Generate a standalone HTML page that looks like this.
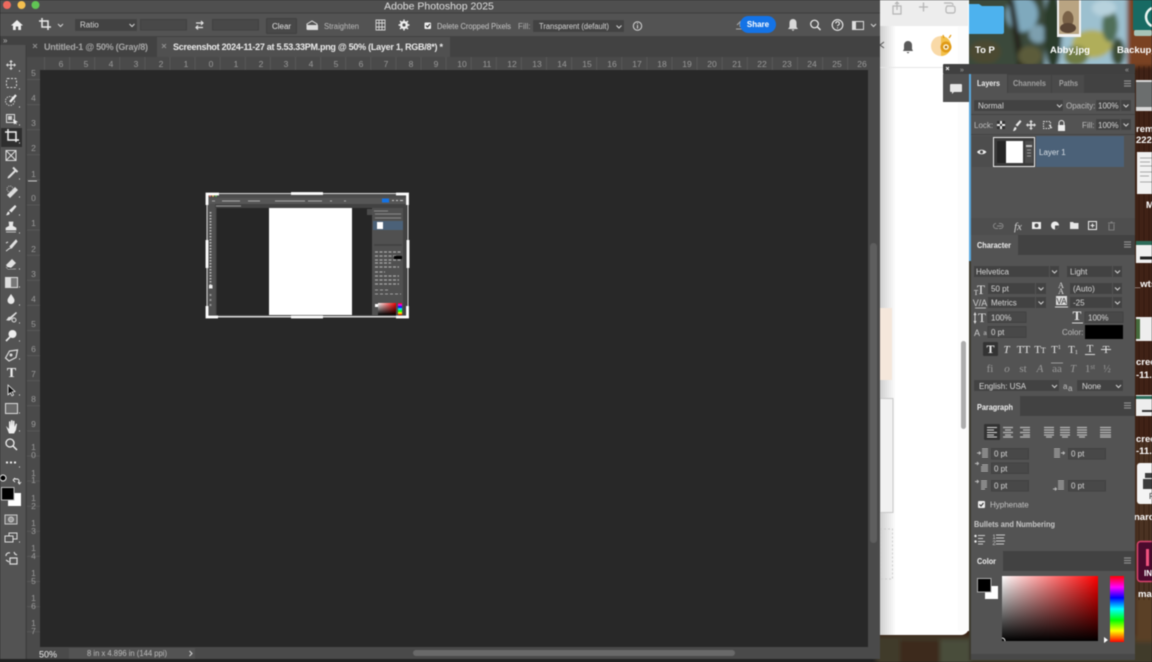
<!DOCTYPE html>
<html lang="en"><head><meta charset="utf-8"><title>Adobe Photoshop 2025</title>
<style>
html,body{margin:0;padding:0;background:#222;width:1152px;height:662px;overflow:hidden}
svg{display:block;filter:blur(.42px)}
text{font-family:"Liberation Sans",sans-serif;font-size:8px;fill:#d8d8d8}
.r{fill:#9a9a9a;font-size:8.5px;text-anchor:middle}
.w{fill:#fff;font-weight:bold;font-size:9.5px}
.i{fill:none;stroke:#dcdcdc;stroke-width:1.2}
.c{fill:none;stroke:#d5d5d5;stroke-width:1}
.t{fill:#e8e8e8;font-family:"Liberation Serif",serif;font-size:11px;text-anchor:middle}
.g{fill:#9a9a9a;font-family:"Liberation Serif",serif;font-size:11px;text-anchor:middle}
.h{font-size:8.5px;font-weight:bold;fill:#eee}
</style></head><body>
<svg width="1152" height="662" viewBox="0 0 1152 662" xmlns="http://www.w3.org/2000/svg">
<defs>
<linearGradient id="gw" x1="0" x2="1" y1="0" y2="0"><stop offset="0" stop-color="#fff"/><stop offset="1" stop-color="#f00"/></linearGradient>
<linearGradient id="gk" x1="0" x2="0" y1="0" y2="1"><stop offset="0" stop-color="#000" stop-opacity="0"/><stop offset="1" stop-color="#000"/></linearGradient>
<linearGradient id="gh" x1="0" x2="0" y1="0" y2="1"><stop offset="0" stop-color="#f00"/><stop offset=".17" stop-color="#f0f"/><stop offset=".33" stop-color="#00f"/><stop offset=".5" stop-color="#0ff"/><stop offset=".67" stop-color="#0f0"/><stop offset=".83" stop-color="#ff0"/><stop offset="1" stop-color="#f00"/></linearGradient>
<linearGradient id="gs" x1="0" x2="1" y1="0" y2="0"><stop offset="0" stop-color="#cfcfcf"/><stop offset="1" stop-color="#fff"/></linearGradient>
<filter id="bl"><feGaussianBlur stdDeviation="2"/></filter>
</defs>

<!-- desktop wallpaper -->
<rect x="880" y="0" width="272" height="662" fill="#3a2114"/>
<g filter="url(#bl)">
<rect x="965" y="-4" width="95" height="72" fill="#3b4a3a"/>
<ellipse cx="1022" cy="14" rx="16" ry="18" fill="#7fa9bd"/>
<ellipse cx="1038" cy="34" rx="9" ry="9" fill="#7d9fae"/>
<path d="M1008 0l10 70h8L1014 0z" fill="#26281c"/>
<ellipse cx="985" cy="52" rx="16" ry="12" fill="#4c4a32"/>
<ellipse cx="1030" cy="56" rx="12" ry="10" fill="#5c5c3a"/>
<rect x="1045" y="-4" width="85" height="72" fill="#9cc0cf"/>
<ellipse cx="1053" cy="30" rx="9" ry="40" fill="#2a3a2b"/>
<ellipse cx="1092" cy="44" rx="20" ry="14" fill="#b0ae5a"/>
<ellipse cx="1076" cy="56" rx="12" ry="10" fill="#6f7c44"/>
<ellipse cx="1110" cy="26" rx="8" ry="16" fill="#4f6e58"/>
<ellipse cx="1104" cy="8" rx="12" ry="8" fill="#b7d2dd"/>
<ellipse cx="1118" cy="52" rx="7" ry="14" fill="#3a4c34"/>
<rect x="1127" y="-4" width="30" height="72" fill="#7a4223"/>
<rect x="1135" y="66" width="20" height="540" fill="#3f2113"/>
<rect x="1135" y="440" width="20" height="170" fill="#4c3320"/>
<rect x="876" y="636" width="280" height="30" fill="#413b2a"/>
<rect x="1135" y="596" width="20" height="46" fill="#5a4128"/>
<rect x="900" y="640" width="40" height="24" fill="#3c2a1c"/>
<rect x="940" y="640" width="30" height="24" fill="#4a4d3a"/>
</g>
<path d="M1139 66V600M1144 66V600M1149 66V600" stroke="#2b150b" stroke-width="1" opacity=".55"/>
<rect x="969" y="66" width="2" height="594" fill="#3c3a2e"/>
<rect x="969" y="66" width="2" height="195" fill="#59a7dc"/>

<!-- desktop items -->
<path d="M969 4h10l3 2h20a2 2 0 0 1 2 2v24a2 2 0 0 1-2 2h-33z" fill="#4db2ee"/>
<rect x="1057" y="0" width="24" height="37" fill="#f2f2f2"/>
<rect x="1059" y="0" width="20" height="34" fill="#b9a482"/>
<ellipse cx="1068" cy="19" rx="5.500" ry="8" fill="#7a6248"/><ellipse cx="1068" cy="28" rx="8" ry="5" fill="#5b4636"/>
<path d="M1133 0h19v30h-19z" fill="#176a63"/>
<rect x="1134" y="30" width="18" height="6" rx="2" fill="#a7c4b8"/>
<path d="M1152 8a10 10 0 0 0-6 9 10 10 0 0 0 6 9" fill="none" stroke="#e8f4f0" stroke-width="2.500"/>
<text x="975" y="53" class="w">To P</text>
<text x="1050" y="53" class="w">Abby.jpg</text>
<text x="1117" y="53" class="w">Backup_</text>

<rect x="1136" y="80" width="16" height="31" fill="#d8d8d8"/><rect x="1136" y="82" width="16" height="25" fill="#6b6e6e"/>
<text x="1136" y="132" class="w">rem</text><text x="1136" y="143" class="w">222</text>
<rect x="1137" y="152" width="15" height="42" fill="#f1f1f1"/>
<path d="M1140 158h12M1140 162h10M1140 166h12M1140 172h12M1140 176h9M1140 182h12" stroke="#aaa" stroke-width="1"/>
<text x="1146" y="208" class="w">M</text>
<rect x="1136" y="241" width="16" height="22" fill="#f0f0f0"/><rect x="1136" y="241" width="16" height="4" fill="#2d6a58"/><path d="M1140 258h12" stroke="#222" stroke-width="3"/>
<text x="1135" y="287" class="w">_wts</text>
<rect x="1136" y="317" width="16" height="24" fill="#eee"/><rect x="1136" y="319" width="4" height="20" fill="#456a3c"/>
<text x="1136" y="365" class="w">cree</text><text x="1136" y="378" class="w">-11...</text>
<rect x="1136" y="395" width="16" height="21" fill="#eee"/><rect x="1136" y="396" width="16" height="3" fill="#2d6a58"/><path d="M1142 411h10" stroke="#333" stroke-width="2"/>
<text x="1136" y="442" class="w">cree</text><text x="1136" y="454" class="w">-11...</text>
<rect x="1137" y="463" width="20" height="41" rx="3" fill="#f4f4f4"/>
<path d="M1145 473h7v5h-7zM1143 479h9v10h-9z" fill="#3c3c3c"/><text x="1149" y="499" style="fill:#333;font-size:8.500px">P</text>
<text x="1134" y="520" class="w">narc</text>
<rect x="1137.500" y="541.500" width="20" height="40" rx="3" fill="#4b0a2d" stroke="#d8446d" stroke-width="1.500"/>
<rect x="1146" y="549" width="3" height="17" fill="#f0527f"/>
<text x="1144" y="576" class="w" style="font-size:8px">IN</text>
<text x="1138" y="597" class="w">mar</text>

<!-- browser window -->
<path d="M878 0H969V627a8 8 0 0 1-8 8H878z" fill="#fff"/>
<rect x="880" y="0" width="88" height="26" fill="#ededed"/>
<rect x="880" y="26" width="16" height="609" fill="url(#gs)"/>
<rect x="958" y="26" width="11" height="605" fill="#fcfcfc"/>
<rect x="880" y="67" width="78" height="1" fill="#e6e6e6"/>
<rect x="880" y="308" width="12" height="72" fill="#f5e7db"/>
<rect x="880" y="398.500" width="13" height="114" fill="#f1f1f1" stroke="#c8c8c8"/>
<rect x="880" y="529" width="12.500" height="50" fill="none" stroke="#ccc" stroke-dasharray="2 2"/>
<rect x="961" y="341" width="5" height="88" rx="2.500" fill="#adadad"/>
<path d="M893 6h8v8h-8zM897 10V2M895 4l2-2 2 2" fill="none" stroke="#b5b5b5" stroke-width="1.200"/>
<path d="M919 7h9M923.500 2.500v9" stroke="#b5b5b5" stroke-width="1.300"/>
<path d="M944 3h7a2 2 0 0 1 2 2M947 6h6a2 2 0 0 1 2 2v3a2 2 0 0 1-2 2h-5a2 2 0 0 1-2-2V8z" fill="none" stroke="#b5b5b5" stroke-width="1.200"/>
<path d="M908 41a4 4 0 0 1 4 4v4l1 2h-10l1-2v-4a4 4 0 0 1 4-4zM906.500 52h3l-1.500 1.500z" fill="#5a5a5a"/>
<circle cx="941" cy="46" r="10" fill="#f9d9a7"/>
<path d="M941 36a10 10 0 0 1 0 20z" fill="#f3c04a"/><circle cx="946" cy="47" r="5.500" fill="#e09a16"/><circle cx="946" cy="47" r="2.800" fill="#fff4d6"/><circle cx="946" cy="47" r="1.300" fill="#a86a06"/>
<path d="M949 38l2-3M944 38l-1-3" stroke="#e09a16" stroke-width="1.200"/>
<path d="M884 42l-4 3 4 3" stroke="#555" fill="none"/>

<!-- Photoshop window -->
<path d="M0 0H880V659H0z" fill="#444"/>
<rect x="0" y="0" width="880" height="13" fill="#4f4f4f"/>
<circle cx="7" cy="5" r="4" fill="#ed6a5e"/><circle cx="21.500" cy="5" r="4" fill="#f4bf4f"/><circle cx="35.500" cy="5" r="4" fill="#61c554"/>
<text x="439" y="9.500" style="font-size:10.500px;text-anchor:middle;fill:#e0e0e0">Adobe Photoshop 2025</text>
<rect x="0" y="13" width="880" height="23" fill="#535353"/>
<rect x="0" y="12.500" width="880" height="1" fill="#3e3e3e"/>

<!-- options bar -->
<path d="M17 20l6 5.500h-2V30h-2.800v-3.500h-2.400V30H13v-4.500h-2z" fill="#eee"/>
<path d="M39 21h9v9M42 18v9h9" fill="none" stroke="#e8e8e8" stroke-width="1.500"/>
<path d="M58 24l2.500 2.500L63 24" class="c"/>
<rect x="75" y="19" width="62" height="12" rx="1" fill="#424242"/><text x="80" y="27.500">Ratio</text><path d="M129.500 24l2.500 2.500 2.500-2.500" class="c"/>
<rect x="140.500" y="19.500" width="46" height="10.500" fill="#484848" stroke="#414141"/>
<path d="M196 23h7M201 21l2 2-2 2M203 27.500h-7M198 25.500l-2 2 2 2" fill="none" stroke="#e4e4e4" stroke-width="1.200"/>
<rect x="212.500" y="19.500" width="46" height="10.500" fill="#484848" stroke="#414141"/>
<rect x="266.500" y="18.500" width="30" height="15" rx="1" fill="#484848" stroke="#404040"/>
<text x="281.500" y="29" style="text-anchor:middle;fill:#e4e4e4">Clear</text>
<path d="M307 29v-5l5-3 5 3v5z" fill="none" stroke="#ddd"/><path d="M307 25h11v5h-11z" fill="#ddd"/>
<text x="324" y="29" textLength="35" lengthAdjust="spacingAndGlyphs" style="fill:#bcbcbc">Straighten</text>
<path d="M376 20h9v10h-9zM379 20v10M382 20v10M376 23h9M376 27h9" fill="none" stroke="#d5d5d5" stroke-width=".9"/>
<circle cx="404" cy="25" r="2.800" fill="none" stroke="#eee" stroke-width="2.400"/>
<path d="M404 19.500v2M404 28.500v2M398.500 25h2M407.500 25h2M400 21l1.500 1.500M406.500 27.500L408 29M400 29l1.500-1.500M406.500 22.500L408 21" stroke="#eee" stroke-width="1.400"/>
<rect x="424.500" y="22.500" width="6.500" height="6.500" rx="1" fill="#f2f2f2"/><path d="M426 25.500l1.500 1.500 2.500-3" fill="none" stroke="#333" stroke-width="1.100"/>
<text x="437" y="29" textLength="74" lengthAdjust="spacingAndGlyphs" style="fill:#c8c8c8">Delete Cropped Pixels</text>
<text x="518" y="29" style="fill:#b0b0b0">Fill:</text>
<rect x="533" y="20" width="91" height="12" rx="1" fill="#424242"/>
<text x="539" y="29" textLength="70" lengthAdjust="spacingAndGlyphs" style="fill:#d6d6d6">Transparent (default)</text>
<path d="M616.500 25.500l2.500 2.500 2.500-2.500" class="c"/>
<circle cx="637.500" cy="26" r="4.200" class="c"/><path d="M637.500 25v3.500M637.500 23v1" stroke="#d8d8d8"/>
<path d="M736 29h6M737 25l3-3v5" stroke="#aaa" fill="none"/>
<rect x="740" y="16" width="36" height="17" rx="8.500" fill="#1473e6"/>
<text x="758" y="27" style="font-weight:bold;text-anchor:middle;fill:#fff">Share</text>
<path d="M793 19a3.500 3.500 0 0 1 3.500 3.500V27l1.500 2h-10l1.500-2v-4.500A3.500 3.500 0 0 1 793 19zM791.500 29.500h3l-1.500 1.500z" fill="#d8d8d8"/>
<circle cx="814.500" cy="24" r="3.800" fill="none" stroke="#eee" stroke-width="1.200"/><path d="M817.500 27l3 3" stroke="#eee" stroke-width="1.400"/>
<circle cx="837.500" cy="25" r="5.300" fill="none" stroke="#eee" stroke-width="1.100"/><path d="M835.800 23.500a1.800 1.800 0 1 1 2.600 1.500c-.7.400-.9.700-.9 1.300M837.500 27.500v1" fill="none" stroke="#eee"/>
<rect x="852.500" y="21.500" width="11" height="8" fill="none" stroke="#ddd"/><rect x="853" y="22" width="3" height="7" fill="#ddd"/>
<path d="M871 24l2.500 2.500L876 24" class="c"/>

<!-- tab bar -->
<rect x="0" y="36" width="880" height="21" fill="#424242"/>
<rect x="157" y="37" width="293" height="20" fill="#505050"/>
<path d="M33 44l4 4M37 44l-4 4M162 44l4 4M166 44l-4 4" stroke="#909090"/>
<text x="44" y="50" textLength="104" lengthAdjust="spacing" style="font-size:9px;font-weight:bold;fill:#a8a8a8">Untitled-1 @ 50% (Gray/8)</text>
<text x="173" y="50" textLength="270" lengthAdjust="spacing" style="font-size:9px;font-weight:bold;fill:#ececec">Screenshot 2024-11-27 at 5.53.33PM.png @ 50% (Layer 1, RGB/8*) *</text>
<text x="3" y="43" style="fill:#bbb">»</text>

<!-- rulers -->
<rect x="27" y="57" width="853" height="13" fill="#4a4a4a"/>
<rect x="27" y="57" width="13" height="602" fill="#4a4a4a"/>
<rect x="868" y="70" width="12" height="589" fill="#4a4a4a"/>
<rect x="0" y="45" width="26" height="614" fill="#535353"/>
<rect x="25.500" y="45" width="1.500" height="614" fill="#3f3f3f"/>
<line x1="40" x2="868" y1="63.500" y2="63.500" stroke="#585858" stroke-width="13" stroke-dasharray="1 24.100" stroke-dashoffset="-4"/>
<line x1="33.500" x2="33.500" y1="70" y2="650" stroke="#585858" stroke-width="13" stroke-dasharray="1 24.100" stroke-dashoffset="-9"/>
<line x1="28" x2="37" y1="181" y2="181" stroke="#c8c8c8" stroke-width="1"/>
<text x="61" y="67" class="r">6</text><text x="86" y="67" class="r">5</text><text x="111" y="67" class="r">4</text><text x="136" y="67" class="r">3</text><text x="161" y="67" class="r">2</text><text x="186" y="67" class="r">1</text><text x="211" y="67" class="r">0</text><text x="236" y="67" class="r">1</text><text x="261" y="67" class="r">2</text><text x="286" y="67" class="r">3</text><text x="311" y="67" class="r">4</text><text x="336" y="67" class="r">5</text><text x="361" y="67" class="r">6</text><text x="386" y="67" class="r">7</text><text x="411" y="67" class="r">8</text><text x="436" y="67" class="r">9</text><text x="462" y="67" class="r">10</text><text x="487" y="67" class="r">11</text><text x="512" y="67" class="r">12</text><text x="537" y="67" class="r">13</text><text x="562" y="67" class="r">14</text><text x="587" y="67" class="r">15</text><text x="612" y="67" class="r">16</text><text x="637" y="67" class="r">17</text><text x="662" y="67" class="r">18</text><text x="687" y="67" class="r">19</text><text x="712" y="67" class="r">20</text><text x="737" y="67" class="r">21</text><text x="762" y="67" class="r">22</text><text x="787" y="67" class="r">23</text><text x="812" y="67" class="r">24</text><text x="837" y="67" class="r">25</text><text x="862" y="67" class="r">26</text>
<text x="33.500" y="76" class="r">5</text><text x="33.500" y="101" class="r">4</text><text x="33.500" y="126" class="r">3</text><text x="33.500" y="151" class="r">2</text><text x="33.500" y="177" class="r">1</text><text x="33.500" y="201" class="r">0</text><text x="33.500" y="226" class="r">1</text><text x="33.500" y="252" class="r">2</text><text x="33.500" y="277" class="r">3</text><text x="33.500" y="302" class="r">4</text><text x="33.500" y="327" class="r">5</text><text x="33.500" y="352" class="r">6</text><text x="33.500" y="377" class="r">7</text><text x="33.500" y="402" class="r">8</text><text x="33.500" y="427" class="r">9</text>
<text x="33.500" y="450" class="r">1</text><text x="33.500" y="458" class="r">0</text><text x="33.500" y="476" class="r">1</text><text x="33.500" y="483" class="r">1</text><text x="33.500" y="501" class="r">1</text><text x="33.500" y="509" class="r">2</text><text x="33.500" y="526" class="r">1</text><text x="33.500" y="534" class="r">3</text><text x="33.500" y="551" class="r">1</text><text x="33.500" y="559" class="r">4</text><text x="33.500" y="576" class="r">1</text><text x="33.500" y="584" class="r">5</text><text x="33.500" y="601" class="r">1</text><text x="33.500" y="609" class="r">6</text><text x="33.500" y="626" class="r">1</text><text x="33.500" y="634" class="r">7</text>

<!-- canvas -->
<rect x="40" y="70" width="828" height="577" fill="#282828"/>
<rect x="870" y="243" width="7" height="300" rx="3.500" fill="#5e5e5e"/>

<!-- image being cropped -->
<rect x="207" y="194" width="201" height="123" fill="#444"/>
<rect x="215" y="208" width="157" height="107" fill="#262626"/>
<rect x="269" y="208" width="83" height="107" fill="#fff"/>
<rect x="207" y="194" width="201" height="4" fill="#4c4c4c"/>
<rect x="207" y="198" width="201" height="6" fill="#565656"/>
<circle cx="210" cy="196" r=".9" fill="#ed6a5e"/><circle cx="213" cy="196" r=".9" fill="#f4bf4f"/><circle cx="216" cy="196" r=".9" fill="#61c554"/>
<path d="M212 201h3M222 201h18M248 201h12M275 201h30M308 201h14M330 201h2M344 201h2" stroke="#aaa" stroke-width="1"/>
<rect x="382" y="198.500" width="7" height="4" fill="#1473e6"/>
<path d="M392 200.500h2M396 200.500h2M400 200.500h3" stroke="#ccc"/>
<rect x="207" y="204" width="201" height="4" fill="#424242"/>
<path d="M216 206h25" stroke="#999"/>
<rect x="207" y="204" width="8" height="111" fill="#4f4f4f"/>
<rect x="215" y="208" width="1.500" height="107" fill="#484848"/>
<path d="M210.500 212v74" stroke="#bbb" stroke-width="1.800" stroke-dasharray="1.500 1.500"/>
<rect x="209" y="285" width="3.500" height="3.500" fill="#eee"/>
<path d="M210.500 294v14" stroke="#999" stroke-width="1.800" stroke-dasharray="2 3"/>
<rect x="372" y="208" width="31" height="107" fill="#505050"/>
<rect x="367" y="209" width="5" height="6" fill="#4b4b4b"/>
<rect x="403" y="204" width="5" height="111" fill="#424242"/>
<path d="M374 211h14M375 214h26M375 218h26" stroke="#8a8a8a"/>
<rect x="373" y="221" width="30" height="9" fill="#4b6178"/><rect x="377" y="222" width="6" height="7" fill="#fff"/>
<path d="M374 245h28" stroke="#444" stroke-width="2"/>
<path d="M375 252h26M375 256h22M375 260h26M375 263h16M375 267h24M375 272h10M375 276h24M375 280h24M375 284h24" stroke="#a8a8a8" stroke-width="1.200" stroke-dasharray="3 1.500"/>
<rect x="394" y="256" width="8" height="3" fill="#000"/>
<path d="M375 290h14M375 294h26" stroke="#a0a0a0" stroke-dasharray="3 2"/>
<rect x="378" y="303" width="18" height="12" fill="url(#gw)"/><rect x="378" y="303" width="18" height="12" fill="url(#gk)"/>
<rect x="398" y="303" width="4" height="12" fill="url(#gh)"/>
<rect x="375" y="304" width="3" height="3" fill="#fff"/>
<rect x="206" y="316" width="203" height="1.500" fill="#ddd"/><rect x="206.500" y="193" width="1" height="125" fill="#ddd"/><rect x="407.500" y="193" width="1" height="125" fill="#ddd"/><rect x="206" y="193" width="203" height="1" fill="#ddd"/>
<path d="M207 205v-11h12M396 194h11.500v11M207 306v11h11M396 317h11.500v-11" fill="none" stroke="#fff" stroke-width="2.800"/>
<path d="M291 193.500h32M291 317h32M207 240v28M408 240v28" fill="none" stroke="#fff" stroke-width="2.800"/>

<!-- tools -->
<rect x="1" y="128" width="21" height="19" fill="#2e2e2e"/>
<path d="M11 60l2 2h-1.500v2.500H14V63l2 2-2 2v-1.500h-2.500V68H13l-2 2-2-2h1.500v-2.500H8V67l-2-2 2-2v1.500h2.500V62H9z" fill="#e0e0e0"/>
<rect x="6.500" y="78.500" width="10" height="9" rx="1" fill="none" stroke="#ddd" stroke-dasharray="2 1.500"/>
<circle cx="10" cy="101" r="4.500" fill="none" stroke="#ccc" stroke-dasharray="1.500 1"/><path d="M16 95l-6 7" stroke="#eee" stroke-width="2.200"/>
<rect x="6.500" y="114.500" width="8" height="8" fill="none" stroke="#ddd"/><rect x="8" y="116" width="4" height="4" fill="#ccc"/><path d="M13 119l5 3-2 .5 1 2-2-1-1 1z" fill="#eee"/>
<path d="M5 132h11v10M8 129v11h11" fill="none" stroke="#f0f0f0" stroke-width="1.500"/>
<rect x="6" y="150.500" width="10" height="10" fill="none" stroke="#ddd"/><path d="M6 150.500l10 10M16 150.500l-10 10" stroke="#ddd"/>
<path d="M15 169l1.500 1.500-1 1.500-6 6-2 .5.500-2 6-6z" fill="#ddd"/><path d="M13 167.500l4.500 4.500" stroke="#ddd" stroke-width="2"/>
<path d="M7 195l8-8 3 3-8 8z" fill="#ddd"/><circle cx="10" cy="189" r="3" fill="none" stroke="#bbb" stroke-dasharray="1 1"/>
<path d="M15 205l1.500 1.500-5 6-2.500-2zM8.500 211.500c1 1 1.500 1.500 1 2.500s-3 1.500-3.500 1c1-.5 1-3 2.500-3.500z" fill="#e6e6e6"/>
<path d="M9 222h4l-.5 4 3.500 2v2H6v-2l3.500-2zM6 232h10" fill="#e6e6e6" stroke="#e6e6e6" stroke-width=".7"/>
<path d="M16 240l-6 6.500 1.500 1.500 5.500-6.500zM6 251c2-1 3-3 5-3M6 243l2-1" fill="#e0e0e0" stroke="#e0e0e0"/>
<path d="M6 265l6-6 4 4-5 5H8z" fill="#e0e0e0"/><path d="M6 267l2 2h8" stroke="#999"/>
<rect x="5.500" y="277.500" width="12" height="10" fill="#777" stroke="#ddd"/><rect x="6" y="278" width="5" height="9" fill="#ddd"/>
<path d="M11 294c2 3 3.500 4.500 3.500 6.500a3.500 3.500 0 0 1-7 0c0-2 1.500-3.500 3.500-6.500z" fill="#e8e8e8"/>
<path d="M16 312l-6 5c-2-1-2 2-4 3 2 1 5 1 6-2l5-5z" fill="#ddd"/><circle cx="14" cy="320" r="2" fill="none" stroke="#ddd"/>
<circle cx="12.500" cy="334" r="4" fill="#eee"/><path d="M10 337l-4 4" stroke="#eee" stroke-width="1.600"/>
<path d="M5.500 358l4-7 8-1-1.500 7.500-7 3.500z" fill="none" stroke="#ddd" stroke-width="1.200"/><circle cx="11" cy="355" r="1.500" fill="#ddd"/>
<text x="11.500" y="377" style="font-family:'Liberation Serif',serif;font-size:14px;font-weight:bold;fill:#eee;text-anchor:middle">T</text>
<path d="M8 385l7 6.500-3 .5 1.500 3-1.500.8-1.500-3-2.500 2z" fill="#111" stroke="#eee" stroke-width=".8"/>
<rect x="5.500" y="403.500" width="12" height="10" fill="#6a6a6a" stroke="#ddd"/>
<path d="M6 426l3 3v-7.500l1.500-.3.500 5v-6h1.500l.5 6v-5.500l1.500.3v6l1.500-3.500 1 .5-1 6-2 3.500H9z" fill="#eee"/>
<circle cx="10" cy="443" r="4" fill="none" stroke="#eee" stroke-width="1.300"/><path d="M13 446l4 4" stroke="#eee" stroke-width="1.500"/>
<path d="M6 462.500h2M10 462.500h2M14 462.500h2" stroke="#eee" stroke-width="2"/>
<path d="M19 71h1M19 89h1M19 107h1M19 125h1M19 143h1M19 179h1M19 197h1M19 215h1M19 233h1M19 251h1M19 269h1M19 287h1M19 305h1M19 323h1M19 341h1M19 359h1M19 395h1M19 413h1M19 431h1M19 467h1M19 542h1" stroke="#ccc" stroke-width="1.200"/>
<circle cx="3" cy="478" r="3" fill="#000" stroke="#eee"/>
<path d="M14 479h3a2 2 0 0 1 2 2v3M13 480l2-2M13 480l2 2M18 482l1.500 2 1.500-2" fill="none" stroke="#eee" stroke-width=".9"/>
<rect x="8" y="493" width="13" height="13" fill="#fff"/>
<rect x="1.500" y="487.500" width="12.500" height="12.500" fill="#000" stroke="#bbb"/>
<rect x="5" y="515" width="12" height="9" fill="#666" stroke="#ccc"/><circle cx="11" cy="519.500" r="2.500" fill="#999" stroke="#ccc"/>
<rect x="9" y="533" width="8" height="6" fill="#535353" stroke="#ddd"/><rect x="5" y="536" width="8" height="6" fill="#535353" stroke="#ddd"/>
<path d="M6 556a3 3 0 0 1 4-3M14 552l1 2 2 1M10 558h7v6h-7zM6 560l3 2" fill="none" stroke="#ddd" stroke-width="1.200"/>

<!-- status bar -->
<rect x="27" y="647" width="853" height="12" fill="#4a4a4a"/>
<rect x="69" y="648" width="126" height="11" fill="#535353"/>
<text x="39" y="657.500" style="font-size:9px;fill:#ececec">50%</text>
<text x="87" y="656" textLength="80" lengthAdjust="spacingAndGlyphs" style="fill:#bdbdbd">8 in x 4.896 in (144 ppi)</text>
<path d="M189.500 651l2.500 2.500-2.500 2.500" class="c"/>
<rect x="413" y="650" width="322" height="6" rx="3" fill="#696969"/>

<!-- panel column -->
<rect x="971" y="74" width="164" height="586" fill="#535353"/>
<rect x="943" y="64" width="192" height="10" rx="1" fill="#404040"/>
<rect x="943" y="74" width="26" height="28" fill="#505050"/>
<path d="M946 67l3 3M949 67l-3 3" stroke="#eee"/>
<text x="960" y="72" style="font-size:7px;fill:#aaa">»</text><text x="1125" y="72" style="font-size:7px;fill:#aaa">«</text>
<path d="M951 84h10a1 1 0 0 1 1 1v6a1 1 0 0 1-1 1h-7l-2 2v-2h-1a1 1 0 0 1-1-1v-6a1 1 0 0 1 1-1z" fill="#e6e6e6"/>

<!-- layers -->
<rect x="971" y="74" width="164" height="19" fill="#424242"/>
<rect x="971" y="74" width="36" height="19" fill="#535353"/>
<rect x="1008" y="75" width="43" height="18" fill="#4a4a4a"/><rect x="1052" y="75" width="32" height="18" fill="#4a4a4a"/>
<text x="977" y="86" textLength="23" lengthAdjust="spacingAndGlyphs" class="h">Layers</text>
<text x="1013" y="86" textLength="33" lengthAdjust="spacingAndGlyphs" class="h" style="fill:#a0a0a0">Channels</text>
<text x="1059" y="86" textLength="19" lengthAdjust="spacingAndGlyphs" class="h" style="fill:#a0a0a0">Paths</text>
<path d="M1124 81h7M1124 83.500h7M1124 86h7" stroke="#8d8d8d" stroke-width="1.200"/>
<rect x="974" y="100" width="89" height="11" rx="1" fill="#424242"/><text x="978" y="108.500">Normal</text><path d="M1057 104.500l2.500 2.500 2.500-2.500" class="c"/>
<text x="1066" y="108.500" style="fill:#bdbdbd">Opacity:</text>
<rect x="1096" y="100" width="24" height="11" rx="1" fill="#424242"/><text x="1098" y="108.500">100%</text>
<rect x="1121" y="100" width="10" height="11" rx="1" fill="#424242"/><path d="M1123.500 104.500l2.500 2.500 2.500-2.500" class="c"/>
<rect x="971" y="114" width="164" height="1" fill="#444"/><rect x="971" y="134" width="164" height="1" fill="#444"/>
<text x="974" y="128" style="fill:#bdbdbd">Lock:</text>
<rect x="997" y="121" width="8" height="8" fill="#eee"/><path d="M997 121h3v3h-3zM1002 121h3v3h-3zM1000 124h2v2h-2zM997 126h3v3h-3zM1002 126h3v3h-3z" fill="#333"/>
<path d="M1020 120l1.500 1.500-4 5-2-1.500zM1013 131c1-2 1-4 2.500-4l1 1c0 2-2 3-3.500 3z" fill="#e6e6e6"/>
<path d="M1031 120l2 2h-1.300v2.300H1034V123l2 2-2 2v-1.300h-2.300V128h1.300l-2 2-2-2h1.300v-2.300H1028v1.300l-2-2 2-2v1.300h2.300V122H1029z" fill="#e0e0e0"/>
<rect x="1043.500" y="121.500" width="7" height="7" fill="none" stroke="#ddd" stroke-dasharray="1.500 1"/><path d="M1049 125l3 3" stroke="#ddd"/>
<path d="M1059 125v-2a2.500 2.500 0 0 1 5 0v2" fill="none" stroke="#eee"/><rect x="1058" y="125" width="7" height="6" fill="#eee"/>
<text x="1082" y="128" style="fill:#bdbdbd">Fill:</text>
<rect x="1096" y="119" width="24" height="11" rx="1" fill="#424242"/><text x="1098" y="128">100%</text>
<rect x="1121" y="119" width="10" height="11" rx="1" fill="#424242"/><path d="M1123.500 123.500l2.500 2.500 2.500-2.500" class="c"/>
<rect x="972" y="136" width="152" height="31" fill="#4d4d4d"/>
<rect x="1036" y="136" width="88" height="31" fill="#4b6178"/>
<path d="M977 152c2-3 7-3 9.500 0-2.500 3-7.500 3-9.500 0z" fill="#eee"/><circle cx="981.500" cy="152" r="1.500" fill="#444"/>
<rect x="993.500" y="137.500" width="41" height="29" fill="#3a3a3a" stroke="#eee"/>
<rect x="997" y="141" width="9" height="22" fill="#262626"/>
<rect x="1006" y="141" width="17" height="22" fill="#fff"/>
<rect x="1025" y="141" width="8" height="22" fill="#4c4c4c"/><rect x="1026" y="145" width="6" height="2" fill="#bbb"/><path d="M1027 150h4M1027 153h4M1027 156h4" stroke="#999"/>
<text x="1039" y="155" style="fill:#d8dfe6">Layer 1</text>
<rect x="971" y="218" width="164" height="17" fill="#4e4e4e"/>
<path d="M997 226h5M999 223.500h1.500a2.500 2.500 0 0 1 0 5H999M996 223.500a2.500 2.500 0 0 0 0 5h2" fill="none" stroke="#8a8a8a"/>
<text x="1014" y="230" style="font-family:'Liberation Serif',serif;font-style:italic;font-size:11px;fill:#d4d4d4">fx</text>
<rect x="1032" y="222" width="9" height="7" fill="#eee"/><circle cx="1036.500" cy="225.500" r="2" fill="#4e4e4e"/>
<circle cx="1055" cy="225.500" r="4" fill="#eee"/><path d="M1055 225.500h4a4 4 0 0 1-4 4z" fill="#4e4e4e"/>
<path d="M1070 222h3l1 1h4.500v6H1070z" fill="#e6e6e6"/>
<rect x="1088.500" y="221.500" width="8" height="8" fill="none" stroke="#eee"/><path d="M1092.500 223.500v4M1090.500 225.500h4" stroke="#eee"/>
<path d="M1108 223h7M1109 224v6h5v-6M1110.500 222h2" fill="none" stroke="#7e7e7e" stroke-width="1.100"/>

<!-- character -->
<rect x="971" y="235" width="164" height="20" fill="#424242"/>
<rect x="971" y="235" width="47" height="20" fill="#535353"/>
<text x="977" y="248" textLength="34" lengthAdjust="spacingAndGlyphs" class="h">Character</text>
<path d="M1124 242h7M1124 244.500h7M1124 247h7" stroke="#8d8d8d" stroke-width="1.200"/>
<rect x="974" y="266" width="75" height="11" fill="#424242"/><text x="976" y="274.500">Helvetica</text>
<rect x="1050" y="266" width="9" height="11" fill="#424242"/><path d="M1052 270.500l2.500 2.500 2.500-2.500" class="c"/>
<rect x="1067" y="266" width="45" height="11" fill="#424242"/><text x="1070" y="274.500">Light</text>
<rect x="1113" y="266" width="9" height="11" fill="#424242"/><path d="M1115 270.500l2.500 2.500 2.500-2.500" class="c"/>
<text x="981" y="294" class="t" style="font-size:13px">T</text><text x="976" y="295" class="t" style="font-size:7px">T</text>
<rect x="988" y="283" width="47" height="11" fill="#424242"/><text x="991" y="291.500">50 pt</text>
<rect x="1036" y="283" width="10" height="11" fill="#424242"/><path d="M1038.500 287.500l2.500 2.500 2.500-2.500" class="c"/>
<text x="1061" y="288" class="t" style="font-size:8px">A</text><text x="1061" y="294" class="t" style="font-size:8px">A</text>
<rect x="1070" y="283" width="42" height="11" fill="#424242"/><text x="1073" y="291.500">(Auto)</text>
<rect x="1113" y="283" width="9" height="11" fill="#424242"/><path d="M1115 287.500l2.500 2.500 2.500-2.500" class="c"/>
<text x="980" y="306" style="font-size:9px;fill:#d0d0d0;text-anchor:middle">V/A</text><path d="M975 308h11" stroke="#bbb"/>
<rect x="988" y="297" width="47" height="11" fill="#424242"/><text x="991" y="305.500">Metrics</text>
<rect x="1036" y="297" width="10" height="11" fill="#424242"/><path d="M1038.500 301.500l2.500 2.500 2.500-2.500" class="c"/>
<rect x="1056" y="296" width="11" height="9" fill="#ddd"/><text x="1061.500" y="304" style="fill:#333;text-anchor:middle">VA</text><path d="M1055 307h13" stroke="#ddd"/>
<rect x="1070" y="297" width="42" height="11" fill="#424242"/><text x="1073" y="305.500">-25</text>
<rect x="1113" y="297" width="9" height="11" fill="#424242"/><path d="M1115 301.500l2.500 2.500 2.500-2.500" class="c"/>
<text x="982" y="322" class="t" style="font-size:13px">T</text><path d="M975 313v10M974 315l1-2 1 2M974 321l1 2 1-2" fill="none" stroke="#ddd" stroke-width=".9"/>
<rect x="988" y="312" width="38" height="10.500" fill="#484848" stroke="#424242"/><text x="991" y="320.500">100%</text>
<text x="1077" y="320" class="t" style="font-size:13px;font-weight:bold">T</text><path d="M1072 323h11" stroke="#ddd"/>
<rect x="1085" y="312" width="38" height="10.500" fill="#484848" stroke="#424242"/><text x="1088" y="320.500">100%</text>
<text x="977" y="336" style="font-size:9px;fill:#ccc;text-anchor:middle">A</text><text x="985" y="335" style="font-size:6px;fill:#ccc;text-anchor:middle">a</text>
<rect x="988" y="326.500" width="38" height="11" fill="#484848" stroke="#424242"/><text x="991" y="335">0 pt</text>
<text x="1062" y="335" style="fill:#bdbdbd">Color:</text>
<rect x="1085" y="325" width="38" height="14" fill="#000"/>
<rect x="983" y="342" width="15" height="14" rx="1" fill="#333"/>
<text x="990.500" y="353" class="t" style="font-weight:bold;font-size:12px">T</text>
<text x="1006.500" y="353" class="t" style="font-style:italic">T</text>
<text x="1023.500" y="353" class="t">TT</text>
<text x="1040" y="353" class="t">T<tspan font-size="8">T</tspan></text>
<text x="1056" y="353" class="t">T<tspan font-size="6" dy="-4">1</tspan></text>
<text x="1073" y="353" class="t">T<tspan font-size="6" dy="1">1</tspan></text>
<text x="1090" y="352" class="t">T</text><path d="M1085 354.500h10" stroke="#ddd"/>
<text x="1106" y="353" class="t">T</text><path d="M1101 349.500h10" stroke="#ddd"/>
<text x="990" y="372" class="g">fi</text>
<text x="1007" y="372" class="g" style="font-style:italic">o</text>
<text x="1023" y="372" class="g">st</text>
<text x="1040" y="372" class="g" style="font-style:italic">A</text>
<text x="1057" y="372" class="g">aa</text><path d="M1051 363h12" stroke="#9a9a9a"/>
<text x="1073" y="372" class="g" style="font-style:italic">T</text>
<text x="1090" y="372" class="g">1<tspan font-size="7" dy="-3">st</tspan></text>
<text x="1107" y="372" class="g" style="font-size:10px">½</text>
<rect x="974" y="380" width="85" height="11" rx="1" fill="#424242"/><text x="979" y="389">English: USA</text><path d="M1052 385l2.500 2.500 2.500-2.500" class="c"/>
<text x="1063" y="389" style="fill:#c0c0c0">a</text><text x="1068" y="391" style="fill:#c0c0c0">a</text>
<rect x="1077" y="380" width="46" height="11" rx="1" fill="#424242"/><text x="1082" y="389">None</text><path d="M1116 385l2.500 2.500 2.500-2.500" class="c"/>

<!-- paragraph -->
<rect x="971" y="396" width="164" height="20" fill="#424242"/>
<rect x="971" y="396" width="49" height="20" fill="#535353"/>
<text x="977" y="410" textLength="36" lengthAdjust="spacingAndGlyphs" class="h">Paragraph</text>
<path d="M1124 403h7M1124 405.500h7M1124 408h7" stroke="#8d8d8d" stroke-width="1.200"/>
<rect x="984" y="424" width="16" height="16" rx="1" fill="#333"/>
<path d="M987 427.500h10M987 430h7M987 432.500h10M987 435h7M987 437h10" stroke="#d8d8d8" stroke-width="1.100"/>
<path d="M1003 427.500h10M1005 430h6M1003 432.500h10M1005 435h6M1003 437h10M1020 427.500h10M1023 430h7M1020 432.500h10M1023 435h7M1020 437h10M1044 427.500h10M1044 430h10M1044 432.500h10M1044 435h10M1046 437h6M1060 427.500h10M1060 430h10M1060 432.500h10M1060 435h10M1062 437h6M1077 427.500h10M1077 430h10M1077 432.500h10M1077 435h10M1079 437h6M1100 427.500h11M1100 430h11M1100 432.500h11M1100 435h11M1100 437h11" stroke="#b8b8b8" stroke-width="1.200"/>
<path d="M977 453h3M979 451.500l1.500 1.500-1.500 1.500M982 449h6M982 451h6M982 453h6M982 455h6M982 457h6" fill="none" stroke="#bbb"/>
<rect x="991.500" y="448.500" width="37" height="10.500" fill="#484848" stroke="#424242"/><text x="994" y="456.500">0 pt</text>
<path d="M1054 449h6M1054 451h6M1054 453h6M1054 455h6M1054 457h6M1061 453h3M1063 451.500l1.500 1.500-1.500 1.500" fill="none" stroke="#bbb"/>
<rect x="1068.500" y="448.500" width="37" height="10.500" fill="#484848" stroke="#424242"/><text x="1071" y="456.500">0 pt</text>
<path d="M975 463.500h3M977 462l1.500 1.500-1.500 1.500M982 465h6M981 467h7M981 469h7M981 471h7" fill="none" stroke="#bbb"/>
<rect x="991.500" y="463" width="37" height="10.500" fill="#484848" stroke="#424242"/><text x="994" y="471.500">0 pt</text>
<path d="M975 481.500h3M977 480l1.500 1.500-1.500 1.500M981 481h6M981 483h6M981 485h6M981 487h6M981 489h4" fill="none" stroke="#bbb"/>
<rect x="991.500" y="480.500" width="37" height="10.500" fill="#484848" stroke="#424242"/><text x="994" y="488.500">0 pt</text>
<path d="M1053 489h3M1055 487.500l1.500 1.500-1.500 1.500M1058 481h6M1058 483h6M1058 485h6M1058 487h6M1058 489h6" fill="none" stroke="#bbb"/>
<rect x="1068.500" y="480.500" width="37" height="10.500" fill="#484848" stroke="#424242"/><text x="1071" y="488.500">0 pt</text>
<rect x="978" y="501" width="7" height="7" rx="1" fill="#eee"/><path d="M979.500 504.500l1.500 1.500 2.500-3" fill="none" stroke="#333" stroke-width="1.100"/>
<text x="990" y="507.500" style="fill:#c4c4c4">Hyphenate</text>
<text x="974" y="527" textLength="81" lengthAdjust="spacingAndGlyphs" style="font-weight:bold;fill:#c8c8c8">Bullets and Numbering</text>
<path d="M978 535.500h7M978 538.500h5M978 541.500h7M978 544h5M996 535h9M996 538h8M996 541h9M996 544h8" stroke="#ccc"/>
<circle cx="975.500" cy="536" r="1.200" fill="#eee"/><circle cx="975.500" cy="541.500" r="1.200" fill="#eee"/>
<text x="994" y="539" style="font-size:6px;fill:#ccc;text-anchor:middle">1</text><text x="994" y="545" style="font-size:6px;fill:#ccc;text-anchor:middle">2</text>

<!-- color -->
<rect x="971" y="551" width="164" height="20" fill="#424242"/>
<rect x="971" y="551" width="32" height="20" fill="#535353"/>
<text x="977" y="564" textLength="19" lengthAdjust="spacingAndGlyphs" class="h">Color</text>
<path d="M1124 558h7M1124 560.500h7M1124 563h7" stroke="#8d8d8d" stroke-width="1.200"/>
<rect x="985" y="586" width="13" height="13" fill="#fff"/>
<rect x="977.500" y="578.500" width="13.500" height="13.500" fill="#000" stroke="#aaa"/>
<rect x="1002" y="576" width="96" height="65" fill="url(#gw)"/><rect x="1002" y="576" width="96" height="65" fill="url(#gk)"/>
<path d="M1002 638a3 3 0 0 1 3 3" stroke="#eee" fill="none"/>
<rect x="1110" y="576" width="14" height="66" fill="url(#gh)"/>
<path d="M1104 637l4 3-4 3z" fill="#fff"/>
<rect x="971" y="654" width="164" height="6" fill="#484848"/>
</svg>
</body></html>
